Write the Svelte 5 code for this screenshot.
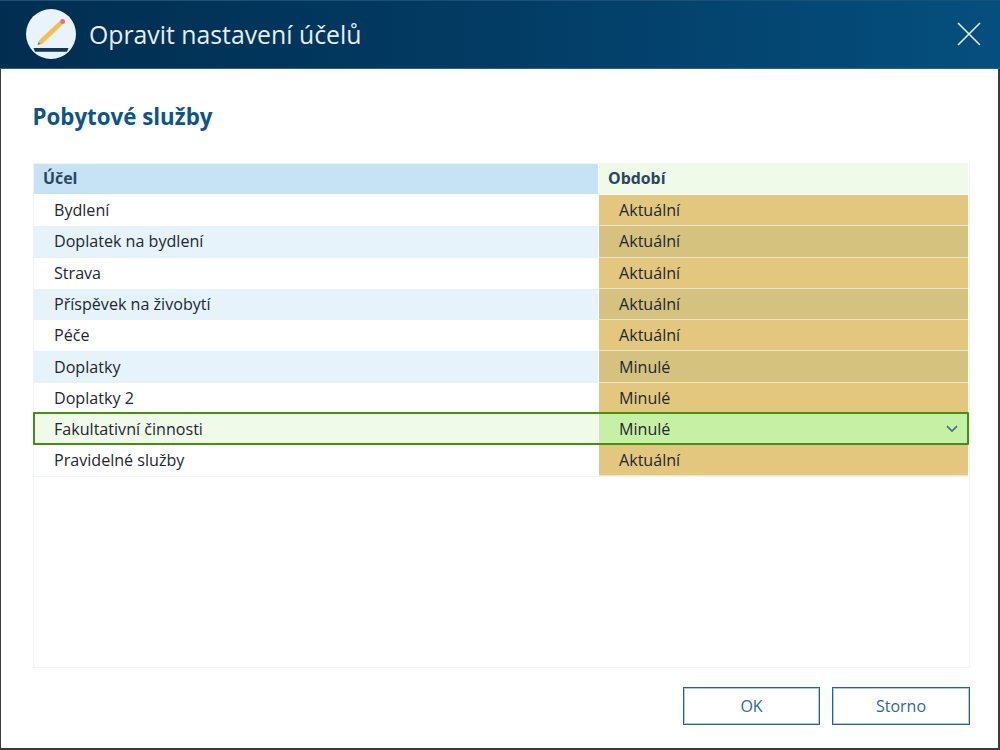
<script>
  const rows = [
    ['Bydlení', 'Aktuální'],
    ['Doplatek na bydlení', 'Aktuální'],
    ['Strava', 'Aktuální'],
    ['Příspěvek na živobytí', 'Aktuální'],
    ['Péče', 'Aktuální'],
    ['Doplatky', 'Minulé'],
    ['Doplatky 2', 'Minulé'],
    ['Fakultativní činnosti', 'Minulé'],
    ['Pravidelné služby', 'Aktuální']
  ];
  const selected = 7;
</script>

<div class="window">
  <header class="titlebar">
    <div class="logo">
      <svg width="50" height="50" viewBox="0 0 50 50">
        <circle cx="25" cy="25" r="25" fill="#e9f3fb" />
        <path d="M11.6 36 L12.9 31.6 L33.4 12.2 L36.6 15.6 L16.1 35 Z" fill="#f6bd4f" />
        <path d="M11.6 36 L12.4 33 L14.7 35 Z" fill="#8a7a8a" />
        <circle cx="36.6" cy="12.4" r="2.5" fill="#ee6f73" />
        <path d="M7.5 39 H42.5 L41 42.7 H9 Z" fill="#0f3557" />
      </svg>
    </div>
    <h1>Opravit nastavení účelů</h1>
    <svg class="close" width="24" height="24" viewBox="0 0 24 24">
      <path d="M1 1 L23 23 M23 1 L1 23" stroke="#e6eef4" stroke-width="1.6" fill="none" />
    </svg>
  </header>

  <main class="body">
    <h2>Pobytové služby</h2>
    <div class="table">
      <div class="row head">
        <div class="cell c1">Účel</div>
        <div class="cell c2">Období</div>
      </div>
      {#each rows as r, i}
        <div class="row" class:alt={i % 2 === 1} class:sel={i === selected}>
          <div class="cell c1">{r[0]}</div>
          <div class="cell c2">
            {r[1]}
            {#if i === selected}
              <svg class="chev" width="12" height="8" viewBox="0 0 12 8">
                <path d="M1 1.2 L6 6 L11 1.2" stroke="#3f6f96" stroke-width="1.7" fill="none" />
              </svg>
            {/if}
          </div>
        </div>
      {/each}
    </div>
    <footer class="actions">
      <button class="ok">OK</button>
      <button class="cancel">Storno</button>
    </footer>
  </main>
</div>

<style>
  :global(body) {
    margin: 0;
    background: #fff;
  }
  .window {
    width: 1000px;
    height: 750px;
    box-sizing: border-box;
    display: flex;
    flex-direction: column;
    font-family: 'Open Sans', sans-serif;
    overflow: hidden;
  }
  .titlebar {
    height: 69px;
    flex: none;
    box-sizing: border-box;
    display: flex;
    align-items: center;
    padding: 0 19px 2px 26px;
    background: linear-gradient(90deg, #012e50 0%, #023a62 45%, #054f7e 100%);
    border-top: 1px solid #1d5074;
    border-bottom: 1px solid #2a6388;
  }
  .logo {
    width: 50px;
    height: 50px;
    flex: none;
  }
  .logo svg {
    display: block;
  }
  h1 {
    margin: 0 0 0 13px;
    font-size: 24.8px;
    font-weight: 400;
    color: #e6eef4;
    flex: 1;
  }
  .close {
    flex: none;
  }
  .body {
    flex: 1;
    min-height: 0;
    box-sizing: border-box;
    border: 1px solid #3a3a3a;
    border-width: 0 2px 2px 1px;
    padding: 0 28px 0 32px;
    display: flex;
    flex-direction: column;
  }
  h2 {
    margin: 32px 0 30px -0.5px;
    font-size: 22.3px;
    line-height: 32px;
    font-weight: 700;
    color: #0d5587;
  }
  .table {
    height: 505px;
    box-sizing: border-box;
    border: 1px solid #edf3f9;
    flex: none;
  }
  .row {
    display: flex;
    height: 31.3px;
    box-sizing: border-box;
    font-size: 16.1px;
    color: #1d2731;
    position: relative;
  }
  .cell {
    display: flex;
    align-items: center;
    box-sizing: border-box;
    position: relative;
    border-bottom: 1px solid transparent;
  }
  .c1 {
    width: 564px;
    padding-left: 20px;
  }
  .c2 {
    flex: 1;
    margin-left: 1px;
    margin-right: 1px;
    padding-left: 20px;
    background: #e3c77f;
    border-bottom-color: #ece4cc;
    white-space: pre;
  }
  .head {
    height: 30px;
    margin-bottom: 1px;
    font-weight: 700;
    color: #29475f;
    font-size: 15.9px;
  }
  .head .cell {
    border-bottom-width: 2px;
  }
  .head .c1 {
    background: #c6e3f5;
    padding-left: 9px;
  }
  .head .c2 {
    background: #f0fae9;
    padding-left: 9px;
    border-bottom-color: transparent;
  }
  .alt .c1 {
    background: #e6f3fa;
  }
  .alt .c2 {
    background: #d5c27f;
  }
  .row:last-child {
    border-bottom: 1px solid #edf3f9;
  }
  .sel .c1 {
    background: #f0fae9;
  }
  .sel .c2 {
    background: #c6f1a5;
    border-bottom-color: transparent;
  }
  .sel::after {
    content: '';
    position: absolute;
    left: -1px;
    right: 0;
    top: -2px;
    bottom: 0;
    border: 2px solid #468f13;
    border-radius: 1px;
    pointer-events: none;
  }
  .chev {
    position: absolute;
    right: 10px;
    top: 50%;
    margin-top: -4px;
  }
  .actions {
    margin-top: 19px;
    display: flex;
    justify-content: flex-end;
    gap: 12px;
  }
  button {
    height: 38px;
    box-sizing: border-box;
    border: 1px solid #246291;
    box-shadow: inset 0 0 0 1px rgba(36, 98, 145, 0.35);
    background: #fff;
    color: #2f6a96;
    font: 400 16px 'Open Sans', sans-serif;
    padding: 0;
  }
  .ok {
    width: 137px;
  }
  .cancel {
    width: 138px;
  }
</style>
